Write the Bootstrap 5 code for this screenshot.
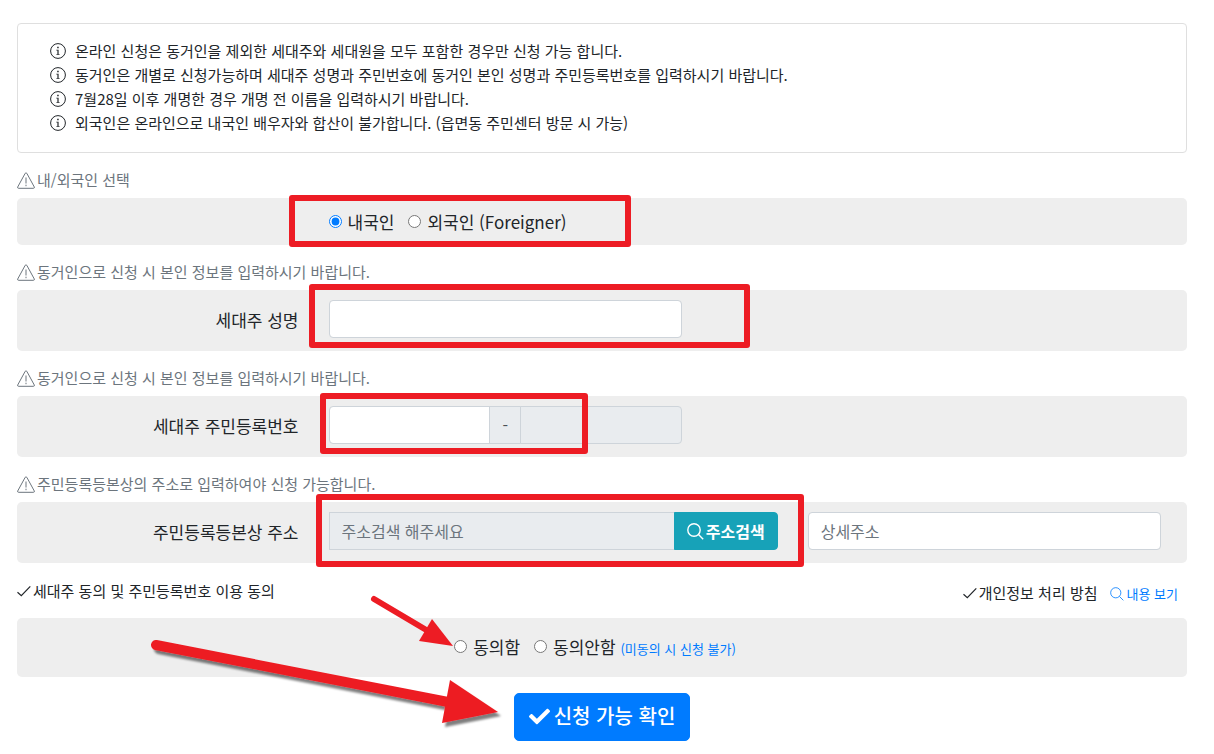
<!DOCTYPE html>
<html lang="ko">
<head>
<meta charset="utf-8">
<meta name="viewport" content="width=device-width, initial-scale=1">
<title>온라인 신청</title>
<link href="https://cdn.jsdelivr.net/npm/bootstrap@5.3.0/dist/css/bootstrap.min.css" rel="stylesheet">
<style>
  body { font-family: "Noto Sans CJK KR", sans-serif; font-size: 15px; line-height: 24px; color: #212529; }
  .page { padding: 23px 27px 13px 17px; }
  .notice { border: 1px solid #dfdfdf; border-radius: 4px; padding: 15px 32px 17px; }
  .notice li { gap: 9px; }
  .hint { color: #6c757d; margin: 15px 0 6px; gap: 2px; }
  .panel { background: #eee; border-radius: 5px; font-size: 17px; line-height: 27px; padding: 10px 11px 10px 9px; }
  .panel .row { --bs-gutter-x: 30px; margin: 0; }
  .panel-field { padding-bottom: 13px; }
  .panel-agree { padding: 15px 16px 17px; }
  .form-control, .input-group-text { font-size: 16px; line-height: 24px; border-color: #ced4da; border-radius: 4px; color: #495057; }
  .form-control { height: 38px; }
  .form-control::placeholder { color: #6c757d; }
  .form-control:disabled, .form-control[readonly], .input-group-text { background: #e9ecef; }
  .choice { gap: 6px; margin-right: 14px; }
  .choice input { width: 13px; height: 13px; margin: 0; accent-color: #007bff; }
  .btn-search { background: #17a2b8; color: #fff; font-size: 16px; line-height: 24px; font-weight: 700; border: 1px solid #17a2b8; border-radius: 4px; padding: 6px 12px; gap: 2px; --sw: 1.4; }
  .btn-search:hover { background: #138496; color: #fff; }
  .btn-confirm { background: #007bff; color: #fff; font-size: 20px; line-height: 30px; font-weight: 500; border: 1px solid #007bff; border-radius: 5px; padding: 7px 14px 9px; gap: 4px; }
  .btn-confirm:hover { background: #0069d9; color: #fff; }
  .agree-head { margin: 16px 0 11px; }
  .agree-title { gap: 2px; }
  .view-link, .agree-note { color: #007bff; text-decoration: none; }
  .view-link { font-size: 13px; margin: 2px 9px 0 10px; gap: 3px; }
  .agree-note { font-size: 13px; line-height: 1; }
  .callout-box { position: absolute; border: 6px solid #ed1c24; border-radius: 3px; pointer-events: none; z-index: 5; }
  .callout-nation { inset: -13px 51px -12px -40px; }
  .callout-name { inset: -16px -68px -10px -20px; }
  .callout-id { inset: -13px 94px -10px -9px; }
  .callout-addr { inset: -18px -26px -17px -13px; }
  .callout-arrows { position: absolute; left: calc(50% - 460px); top: -28px; pointer-events: none; z-index: 5; }
  svg { flex: none; }
</style>
</head>
<body>
<svg width="0" height="0" class="position-absolute" aria-hidden="true">
  <symbol id="i-info" viewBox="0 0 16 16"><circle cx="8" cy="8" r="7.4" fill="none" stroke="currentColor"/><path d="M7.200 3.700h1.500v1.600H7.200zM6.300 6.700h2.300v4.700h1.200v.7H6.200v-.7h1.200V7.400H6.300z" fill="currentColor"/></symbol>
  <symbol id="i-warn" viewBox="0 0 18 17"><path d="M8.2 1.3Q9 .2 9.800 1.300L17.300 15Q17.600 16.300 16.600 16.300H1.400Q.4 16.300 .7 15ZM9 5.500V11.500M9 12.700V14.200" fill="none" stroke="currentColor"/></symbol>
  <symbol id="i-tick" viewBox="0 0 14 12"><path d="M.5 7.300 4.300 10.700 13.300 1.300" fill="none" stroke="currentColor" stroke-width="1.200"/></symbol>
  <symbol id="i-search" viewBox="0 0 17 17"><circle cx="7" cy="7" r="6.200" fill="none" stroke="currentColor" stroke-width="var(--sw, 1)"/><path d="m11.500 11.500 4.700 4.700" stroke="currentColor" stroke-width="var(--sw, 1)"/></symbol>
  <symbol id="i-check" viewBox="0 0 512 512"><path fill="currentColor" d="M173.900 439.400 7.500 273c-10-10-10-26.200 0-36.200l36.200-36.200c10-10 26.200-10 36.200 0L192 312.700 432.100 72.600c10-10 26.200-10 36.200 0l36.200 36.200c10 10 10 26.200 0 36.200L210.100 439.400c-10 10-26.200 10-36.200 0z"/></symbol>
</svg>

<form class="container-fluid page">
  <div class="notice">
    <ul class="list-unstyled mb-0">
      <li class="d-flex align-items-center"><svg width="16" height="16"><use href="#i-info"/></svg>온라인 신청은 동거인을 제외한 세대주와 세대원을 모두 포함한 경우만 신청 가능 합니다.</li>
      <li class="d-flex align-items-center"><svg width="16" height="16"><use href="#i-info"/></svg>동거인은 개별로 신청가능하며 세대주 성명과 주민번호에 동거인 본인 성명과 주민등록번호를 입력하시기 바랍니다.</li>
      <li class="d-flex align-items-center"><svg width="16" height="16"><use href="#i-info"/></svg>7월28일 이후 개명한 경우 개명 전 이름을 입력하시기 바랍니다.</li>
      <li class="d-flex align-items-center"><svg width="16" height="16"><use href="#i-info"/></svg>외국인은 온라인으로 내국인 배우자와 합산이 불가합니다. (읍면동 주민센터 방문 시 가능)</li>
    </ul>
  </div>

  <p class="hint d-flex align-items-center"><svg width="18" height="17"><use href="#i-warn"/></svg>내/외국인 선택</p>
  <div class="panel">
    <div class="row">
      <div class="col-4 offset-3">
        <div class="position-relative d-flex text-nowrap">
          <label class="choice d-flex align-items-center"><input type="radio" name="nation" checked>내국인</label>
          <label class="choice d-flex align-items-center"><input type="radio" name="nation">외국인 (Foreigner)</label>
          <span class="callout-box callout-nation"></span>
        </div>
      </div>
    </div>
  </div>

  <p class="hint d-flex align-items-center"><svg width="18" height="17"><use href="#i-warn"/></svg>동거인으로 신청 시 본인 정보를 입력하시기 바랍니다.</p>
  <div class="panel panel-field">
    <div class="row align-items-center">
      <label class="col-3 text-end" for="head-name">세대주 성명</label>
      <div class="col-4">
        <div class="position-relative">
          <input type="text" class="form-control" id="head-name">
          <span class="callout-box callout-name"></span>
        </div>
      </div>
    </div>
  </div>

  <p class="hint d-flex align-items-center"><svg width="18" height="17"><use href="#i-warn"/></svg>동거인으로 신청 시 본인 정보를 입력하시기 바랍니다.</p>
  <div class="panel panel-field">
    <div class="row align-items-center">
      <label class="col-3 text-end" for="head-id">세대주 주민등록번호</label>
      <div class="col-4">
        <div class="position-relative">
          <div class="input-group">
            <input type="text" class="form-control" id="head-id">
            <span class="input-group-text">-</span>
            <input type="password" class="form-control" aria-label="주민등록번호 뒷자리" disabled>
          </div>
          <span class="callout-box callout-id"></span>
        </div>
      </div>
    </div>
  </div>

  <p class="hint d-flex align-items-center"><svg width="18" height="17"><use href="#i-warn"/></svg>주민등록등본상의 주소로 입력하여야 신청 가능합니다.</p>
  <div class="panel panel-field">
    <div class="row align-items-center">
      <label class="col-3 text-end" for="addr">주민등록등본상 주소</label>
      <div class="col-5">
        <div class="position-relative">
          <div class="input-group">
            <input type="text" class="form-control rounded-0" id="addr" placeholder="주소검색 해주세요" readonly>
            <button type="button" class="btn btn-search d-flex align-items-center"><svg width="17" height="17"><use href="#i-search"/></svg>주소검색</button>
          </div>
          <span class="callout-box callout-addr"></span>
        </div>
      </div>
      <div class="col-4">
        <input type="text" class="form-control" placeholder="상세주소" aria-label="상세주소">
      </div>
    </div>
  </div>

  <div class="agree-head d-flex justify-content-between">
    <div class="agree-title d-flex align-items-center pb-1"><svg width="14" height="12"><use href="#i-tick"/></svg>세대주 동의 및 주민등록번호 이용 동의</div>
    <div class="agree-title d-flex align-items-center"><svg width="14" height="12"><use href="#i-tick"/></svg>개인정보 처리 방침
      <a href="#privacy" class="view-link d-flex align-items-center"><svg width="14" height="14"><use href="#i-search"/></svg>내용 보기</a>
    </div>
  </div>
  <div class="panel panel-agree position-relative">
    <div class="d-flex justify-content-center">
      <label class="choice d-flex align-items-center"><input type="radio" name="agree">동의함</label>
      <label class="choice d-flex align-items-center"><input type="radio" name="agree"><span>동의안함 <small class="agree-note">(미동의 시 신청 불가)</small></span></label>
    </div>
    <svg class="callout-arrows" width="370" height="150" viewBox="142 590 370 150" aria-hidden="true">
      <defs><filter id="shade" x="-10%" y="-10%" width="120%" height="130%"><feDropShadow dx="3" dy="4" stdDeviation="1" flood-color="#000" flood-opacity=".5"/></filter></defs>
      <g fill="#ed1c24" stroke="#ed1c24" stroke-linecap="round">
        <path d="M374 599 428 631" stroke-width="6"/>
        <path d="M432 619 453 646 419 641Z" stroke="none"/>
        <g filter="url(#shade)">
          <path d="M156 645 448 702" stroke-width="10"/>
          <path d="M450 680 498 712 442 723Z" stroke="none"/>
        </g>
      </g>
    </svg>
  </div>
  <div class="d-flex justify-content-center pt-3">
    <button type="submit" class="btn btn-confirm d-flex align-items-center"><svg width="21" height="21"><use href="#i-check"/></svg>신청 가능 확인</button>
  </div>
</form>
<script src="https://cdn.jsdelivr.net/npm/bootstrap@5.3.0/dist/js/bootstrap.bundle.min.js"></script>
</body>
</html>
